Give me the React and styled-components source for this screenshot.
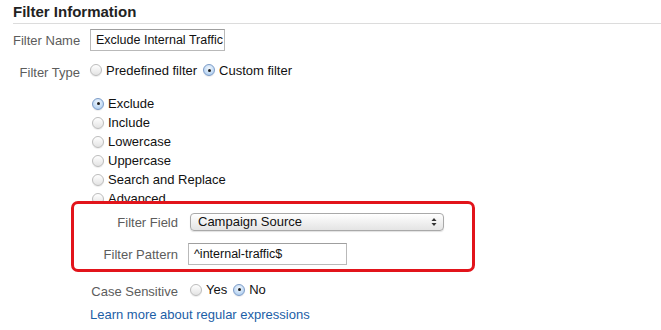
import React from "react";
import styled, { createGlobalStyle } from "styled-components";

const GlobalStyle = createGlobalStyle`
  html, body {
    margin: 0;
    padding: 0;
    background: #fff;
  }
  body {
    font-family: "Liberation Sans", Arial, Helvetica, sans-serif;
    font-size: 13px;
    color: #222;
  }
`;

const Page = styled.div`
  width: 661px;
  height: 330px;
  overflow: hidden;
  background: #fff;
`;

const Header = styled.h2`
  margin: 0 0 0 13px;
  padding-top: 2px;
  height: 21px;
  line-height: 20px;
  font-size: 15px;
  font-weight: bold;
  color: #222;
  border-bottom: 1px solid #dcdcdc;
`;

const Row = styled.div`
  display: grid;
  grid-template-columns: 67px auto;
  column-gap: 10px;
  align-items: center;
  padding-left: 13px;
  margin-top: ${(p) => p.$top}px;
`;

const Label = styled.div`
  text-align: right;
  color: #5c5c5c;
  white-space: nowrap;
  padding-top: ${(p) => p.$drop || 0}px;
`;

const TextInput = styled.div`
  box-sizing: border-box;
  width: ${(p) => p.$width}px;
  height: 22px;
  line-height: 20px;
  padding-left: 5px;
  border: 1px solid #b9b9b9;
  border-top-color: #9f9f9f;
  background: #fff;
  color: #111;
  font-size: 12.5px;
  white-space: nowrap;
  overflow: hidden;
`;

const RadioGroup = styled.div`
  display: flex;
  align-items: center;
  gap: 6px;
  height: 19px;
`;

const RadioItem = styled.label`
  display: inline-flex;
  align-items: center;
  gap: 4px;
  height: 19px;
  line-height: 19px;
  color: #111;
  white-space: nowrap;
`;

const Dot = styled.span`
  box-sizing: border-box;
  position: relative;
  display: inline-block;
  width: 12px;
  height: 12px;
  border-radius: 50%;
  border: 1px solid ${(p) => (p.$on ? "#7d9cc8" : "#bcbcbc")};
  background: ${(p) =>
    p.$on
      ? "radial-gradient(circle at 50% 35%, #f3f8fe 0%, #c6ddf5 55%, #9ec0e8 100%)"
      : "linear-gradient(#ffffff, #e3e3e3)"};
  box-shadow: 0 1px 1px rgba(0, 0, 0, 0.08);

  &::after {
    content: "";
    display: ${(p) => (p.$on ? "block" : "none")};
    position: absolute;
    left: 3.5px;
    top: 3.5px;
    width: 3px;
    height: 3px;
    border-radius: 50%;
    background: #1d1d1d;
  }
`;

const OptionList = styled.div`
  margin: 14px 0 0 92px;
  display: flex;
  flex-direction: column;
`;

const Highlight = styled.div`
  position: relative;
  box-sizing: border-box;
  width: 404px;
  height: 71px;
  margin: -7px 0 0 71px;
  padding: 9px 0 0 0;
  border: 3px solid #e2141b;
  border-radius: 7px;
  background: #fff;
  display: grid;
  grid-template-columns: 104px auto;
  column-gap: 10px;
  row-gap: 12px;
  align-items: center;
  align-content: start;
`;

const FieldRow = styled.div`
  display: grid;
  grid-template-columns: 104px auto;
  column-gap: 12px;
  align-items: center;
  margin: ${(p) => p.$top}px 0 0 74px;
`;

const Select = styled.div`
  box-sizing: border-box;
  width: 254px;
  height: 18px;
  margin-left: 2px;
  padding: 0 6px 0 7px;
  display: flex;
  align-items: center;
  justify-content: space-between;
  border: 1px solid #a9a9a9;
  border-radius: 4px;
  background: linear-gradient(#ffffff, #f1f1f1 50%, #e4e4e4);
  box-shadow: 0 1px 1px rgba(0, 0, 0, 0.12);
  color: #111;
  line-height: 16px;
  white-space: nowrap;
`;

const LearnLink = styled.a`
  display: block;
  margin: 6px 0 0 90px;
  line-height: 19px;
  color: #1b5ea6;
  text-decoration: none;
  cursor: pointer;
`;

function Radio({ on, children }) {
  return (
    <RadioItem>
      <Dot $on={on} />
      {children}
    </RadioItem>
  );
}

function UpDown() {
  return (
    <svg width="6" height="10" viewBox="0 0 6 10">
      <path d="M0.5 4 L3 1 L5.5 4 Z" fill="#333" />
      <path d="M0.5 6 L3 9 L5.5 6 Z" fill="#333" />
    </svg>
  );
}

const filterOptions = [
  { name: "Exclude", on: true },
  { name: "Include" },
  { name: "Lowercase" },
  { name: "Uppercase" },
  { name: "Search and Replace" },
  { name: "Advanced" },
];

export default function App() {
  return (
    <Page>
      <GlobalStyle />
      <Header>Filter Information</Header>

      <Row $top={5}>
        <Label>Filter Name</Label>
        <TextInput $width={135}>Exclude Internal Traffic</TextInput>
      </Row>

      <Row $top={9}>
        <Label $drop={5}>Filter Type</Label>
        <RadioGroup>
          <Radio>Predefined filter</Radio>
          <Radio on>Custom filter</Radio>
        </RadioGroup>
      </Row>

      <OptionList>
        {filterOptions.map((opt) => (
          <Radio key={opt.name} on={opt.on}>
            {opt.name}
          </Radio>
        ))}
      </OptionList>

      <Highlight>
        <Label>Filter Field</Label>
        <Select>
          <span>Campaign Source</span>
          <UpDown />
        </Select>
        <Label>Filter Pattern</Label>
        <TextInput $width={159}>^internal-traffic$</TextInput>
      </Highlight>

      <FieldRow $top={8}>
        <Label $drop={3}>Case Sensitive</Label>
        <RadioGroup>
          <Radio>Yes</Radio>
          <Radio on>No</Radio>
        </RadioGroup>
      </FieldRow>

      <LearnLink>Learn more about regular expressions</LearnLink>
    </Page>
  );
}
